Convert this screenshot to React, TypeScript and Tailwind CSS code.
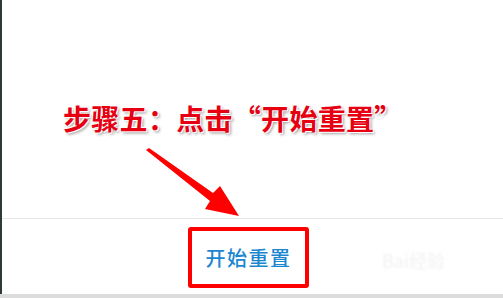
export default function App() {
  return (
    <div className="relative w-[503px] h-[298px] bg-white overflow-hidden">
      <div className="flex h-[294px]">
        <div className="w-[2px] bg-[#2f3a36]" />
        <div className="flex-1 flex flex-col">
          <div className="h-[219px] border-b border-[#e6e6e6] pl-[61px] pt-[101px]">
            <div
              className="text-[28px] leading-[34px] font-bold text-[#e60012] tracking-[0.3px] [text-shadow:1px_1px_0_#fff,-1px_-1px_0_#fff,2px_2px_3px_#9a9a9a]"
              style={{ fontFamily: '"Noto Sans CJK SC", sans-serif' }}
            >
              步骤五：点击“开始重置”
            </div>
          </div>
          <div className="flex-1 relative">
            <div className="absolute left-[186px] top-[8px] w-[121px] h-[61px] border-[4px] border-[#ff0000] rounded-[3px] flex items-center justify-center">
              <span
                className="text-[20px] leading-none font-medium text-[#1c86d1] tracking-[1.5px]"
                style={{ fontFamily: '"Noto Sans CJK SC", sans-serif' }}
              >
                开始重置
              </span>
            </div>
            <div
              className="absolute left-[380px] top-[28px] text-[18px] text-[#f1f1f1] blur-[1px] select-none"
              style={{ fontFamily: '"Noto Sans CJK SC", sans-serif' }}
            >
              Bai经验
            </div>
          </div>
        </div>
      </div>
      <div className="h-[4px] bg-[#dcdcdc]" />
      <svg
        className="absolute left-0 top-0"
        width="503"
        height="298"
        viewBox="0 0 503 298"
      >
        <polygon
          points="146,150 149,148 213,193 220,186 239,216 205,209 210,201"
          fill="#ff0000"
        />
      </svg>
    </div>
  );
}
